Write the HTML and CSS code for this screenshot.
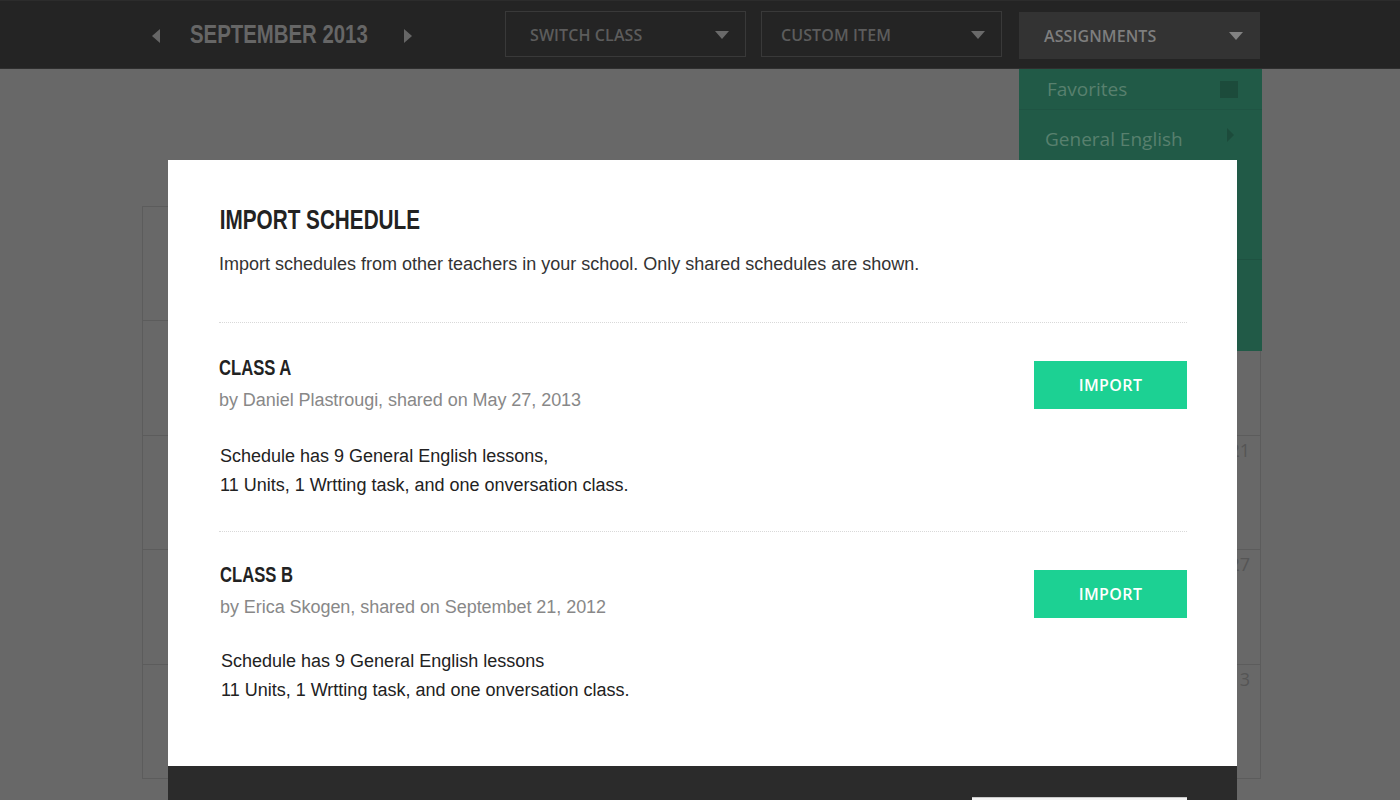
FILE: index.html
```html
<!DOCTYPE html>
<html lang="en">
<head>
<meta charset="utf-8">
<title>Import Schedule</title>
<link rel="stylesheet" href="styles.css">
</head>
<body>
<header class="topbar">
  <div class="month-nav">
    <span class="arrow arrow-left"></span>
    <div class="month"><h1 class="cond month-text">SEPTEMBER 2013</h1></div>
    <span class="arrow arrow-right"></span>
  </div>
  <div class="selects">
    <div class="select"><span>SWITCH CLASS</span><i class="caret"></i></div>
    <div class="select select-gap"><span>CUSTOM ITEM</span><i class="caret"></i></div>
    <div class="select select-open">
      <span>ASSIGNMENTS</span><i class="caret"></i>
      <ul class="menu">
        <li class="menu-first"><span>Favorites</span><i class="fav-box"></i></li>
        <li class="menu-second"><span>General English</span><i class="menu-arrow"></i></li>
        <li><span>Units</span></li>
        <li class="menu-last-top"><span>Writing</span></li>
        <li><span>Conversation</span></li>
      </ul>
    </div>
  </div>
</header>

<main class="calendar">
  <div class="cell"></div><div class="cell"></div><div class="cell"></div><div class="cell"></div><div class="cell"></div><div class="cell"></div><div class="cell">7</div>
  <div class="cell"></div><div class="cell"></div><div class="cell"></div><div class="cell"></div><div class="cell"></div><div class="cell"></div><div class="cell">14</div>
  <div class="cell"></div><div class="cell"></div><div class="cell"></div><div class="cell"></div><div class="cell"></div><div class="cell"></div><div class="cell">21</div>
  <div class="cell"></div><div class="cell"></div><div class="cell"></div><div class="cell"></div><div class="cell"></div><div class="cell"></div><div class="cell">27</div>
  <div class="cell"></div><div class="cell"></div><div class="cell"></div><div class="cell"></div><div class="cell"></div><div class="cell"></div><div class="cell">3</div>
</main>

<div class="modal">
  <div class="modal-body">
    <div class="modal-head">
      <h2 class="cond modal-title">IMPORT SCHEDULE</h2>
      <p class="modal-sub">Import schedules from other teachers in your school. Only shared schedules are shown.</p>
    </div>
    <div class="item item-a">
      <div class="item-info">
        <h3 class="cond item-title">CLASS A</h3>
        <p class="item-by">by Daniel Plastrougi, shared on May 27, 2013</p>
        <p class="item-desc">Schedule has 9 General English lessons,<br>11 Units, 1 Wrtting task, and one onversation class.</p>
      </div>
      <button class="btn-import">IMPORT</button>
    </div>
    <div class="item item-b">
      <div class="item-info">
        <h3 class="cond item-title">CLASS B</h3>
        <p class="item-by">by Erica Skogen, shared on Septembet 21, 2012</p>
        <p class="item-desc">Schedule has 9 General English lessons<br>11 Units, 1 Wrtting task, and one onversation class.</p>
      </div>
      <button class="btn-import">IMPORT</button>
    </div>
  </div>
  <div class="modal-foot">
    <button class="btn-cancel" aria-label="Cancel"></button>
  </div>
</div>
</body>
</html>
```

FILE: styles.css
```css
* { box-sizing: border-box; margin: 0; padding: 0; }

html, body { height: 100%; }

body {
  background: #686868;
  font-family: "Liberation Sans", Arial, sans-serif;
  overflow: hidden;
}

/* condensed bold headings: Arial-metric bold, squeezed horizontally */
.cond {
  display: inline-block;
  font-family: "Liberation Sans", Arial, sans-serif;
  font-weight: 700;
  white-space: nowrap;
  transform-origin: left center;
}

/* ---------- top bar ---------- */
.topbar {
  height: 69px;
  background: #242424;
  border-top: 1px solid #2c2c2c;
  border-bottom: 1px solid #2f2f2f;
  display: flex;
  align-items: flex-start;
  padding: 10px 0 0 152px;
}

.month-nav {
  display: flex;
  align-items: center;
  height: 49px;
}

.arrow {
  width: 0;
  height: 0;
  border-top: 7px solid transparent;
  border-bottom: 7px solid transparent;
}
.arrow-left { border-right: 8px solid #666; }
.arrow-right { border-left: 8px solid #666; }

.month {
  margin-left: 30px;
  width: 214px;
  line-height: 30px;
}

.month-text {
  font-size: 25px;
  color: #666;
  transform: scaleX(0.815);
}

.selects {
  display: flex;
  margin-left: 93px;
}

.select {
  width: 241px;
  height: 46px;
  border: 1px solid #393939;
  display: flex;
  align-items: center;
  justify-content: space-between;
  padding: 1px 16px 0 24px;
  font-family: "Open Sans", sans-serif;
  font-weight: 600;
  font-size: 16px;
  letter-spacing: 0.1px;
  color: #5c5c5c;
}

.select-gap { margin-left: 15px; padding-left: 19px; }

.caret {
  width: 0;
  height: 0;
  border-left: 7.5px solid transparent;
  border-right: 7.5px solid transparent;
  border-top: 8px solid #6a6a6a;
}

.select-open {
  position: relative;
  margin-left: 17px;
  margin-top: 1px;
  height: 47px;
  background: #333;
  border-color: #333;
  color: #7e7e7e;
}
.select-open .caret { border-top-color: #828282; }

.menu {
  position: absolute;
  left: -1px;
  top: 56px;
  width: 243px;
  height: 282px;
  background: #215a47;
  list-style: none;
  font-family: "Open Sans", sans-serif;
  font-weight: 400;
  font-size: 19px;
  letter-spacing: 0;
  color: #58806e;
  z-index: 1;
}

.menu li {
  height: 50px;
  display: flex;
  align-items: center;
  justify-content: space-between;
  padding: 0 24px 0 26px;
}
.menu li.menu-first { height: 41px; padding-left: 28px; border-bottom: 1px solid #1f5443; }
.menu li.menu-second { height: 58px; }
.menu li.menu-last-top { height: 42px; border-bottom: 1px solid #1e5241; }

.fav-box {
  width: 18px;
  height: 17px;
  background: #1c4b3b;
}

.menu-arrow {
  width: 0;
  height: 0;
  border-top: 7px solid transparent;
  border-bottom: 7px solid transparent;
  border-left: 7px solid #1c4b3b;
  margin-right: 4px;
  margin-top: -8px;
}

/* ---------- calendar (behind the modal) ---------- */
.calendar {
  margin: 137px 0 0 142px;
  width: 1119px;
  display: grid;
  grid-template-columns: repeat(7, 1fr);
  border-top: 1px solid #5c5c5c;
  border-left: 1px solid #5c5c5c;
}

.cell {
  height: 114.4px;
  border-right: 1px solid #5c5c5c;
  border-bottom: 1px solid #5c5c5c;
  text-align: right;
  padding: 2px 10px 0 0;
  font-family: "Open Sans", sans-serif;
  font-size: 18px;
  line-height: 24px;
  color: #555;
}

/* ---------- modal ---------- */
.modal {
  position: absolute;
  top: 160px;
  left: 168px;
  width: 1069px;
  z-index: 10;
}

.modal-body {
  background: #fff;
  padding: 44px 50px 28px 51px;
}

.modal-head {
  padding-bottom: 44px;
  border-bottom: 1px dotted #d9d9d9;
}

.modal-title {
  font-size: 28px;
  line-height: 32px;
  color: #222;
  padding-left: 1px;
  transform: scaleX(0.74);
}

.modal-sub {
  margin-top: 14px;
  font-size: 18px;
  line-height: 28px;
  color: #333;
}

.item {
  display: flex;
  justify-content: space-between;
  align-items: flex-start;
  padding: 32px 0 31px;
  border-bottom: 1px dotted #d9d9d9;
}
.item-b { border-bottom: none; padding: 30px 0 33px 1px; }

.item-info { display: flex; flex-direction: column; align-items: flex-start; }

.item-title {
  font-size: 22px;
  line-height: 26px;
  color: #222;
  transform: scaleX(0.755);
}

.item-by {
  margin-top: 4px;
  font-size: 18px;
  line-height: 30px;
  letter-spacing: -0.05px;
  color: #888;
}

.item-desc {
  margin-top: 27px;
  padding-left: 1px;
  font-size: 18px;
  line-height: 29px;
  color: #222;
}
.item-b .item-desc { margin-top: 25px; }

.btn-import {
  width: 153px;
  height: 48px;
  margin-top: 6px;
  border: none;
  background: #1cd193;
  color: #fff;
  font-family: "Open Sans", sans-serif;
  font-weight: 600;
  font-size: 16px;
  letter-spacing: 0.4px;
}
.item-b .btn-import { margin-top: 8px; }

.modal-foot {
  height: 110px;
  background: #2b2b2b;
  display: flex;
  justify-content: flex-end;
  padding: 31px 50px 0;
}

.btn-cancel {
  width: 215px;
  height: 48px;
  border: none;
  border-top: 1px solid #c9c9c9;
  background: #f3f3f3;
}
```
